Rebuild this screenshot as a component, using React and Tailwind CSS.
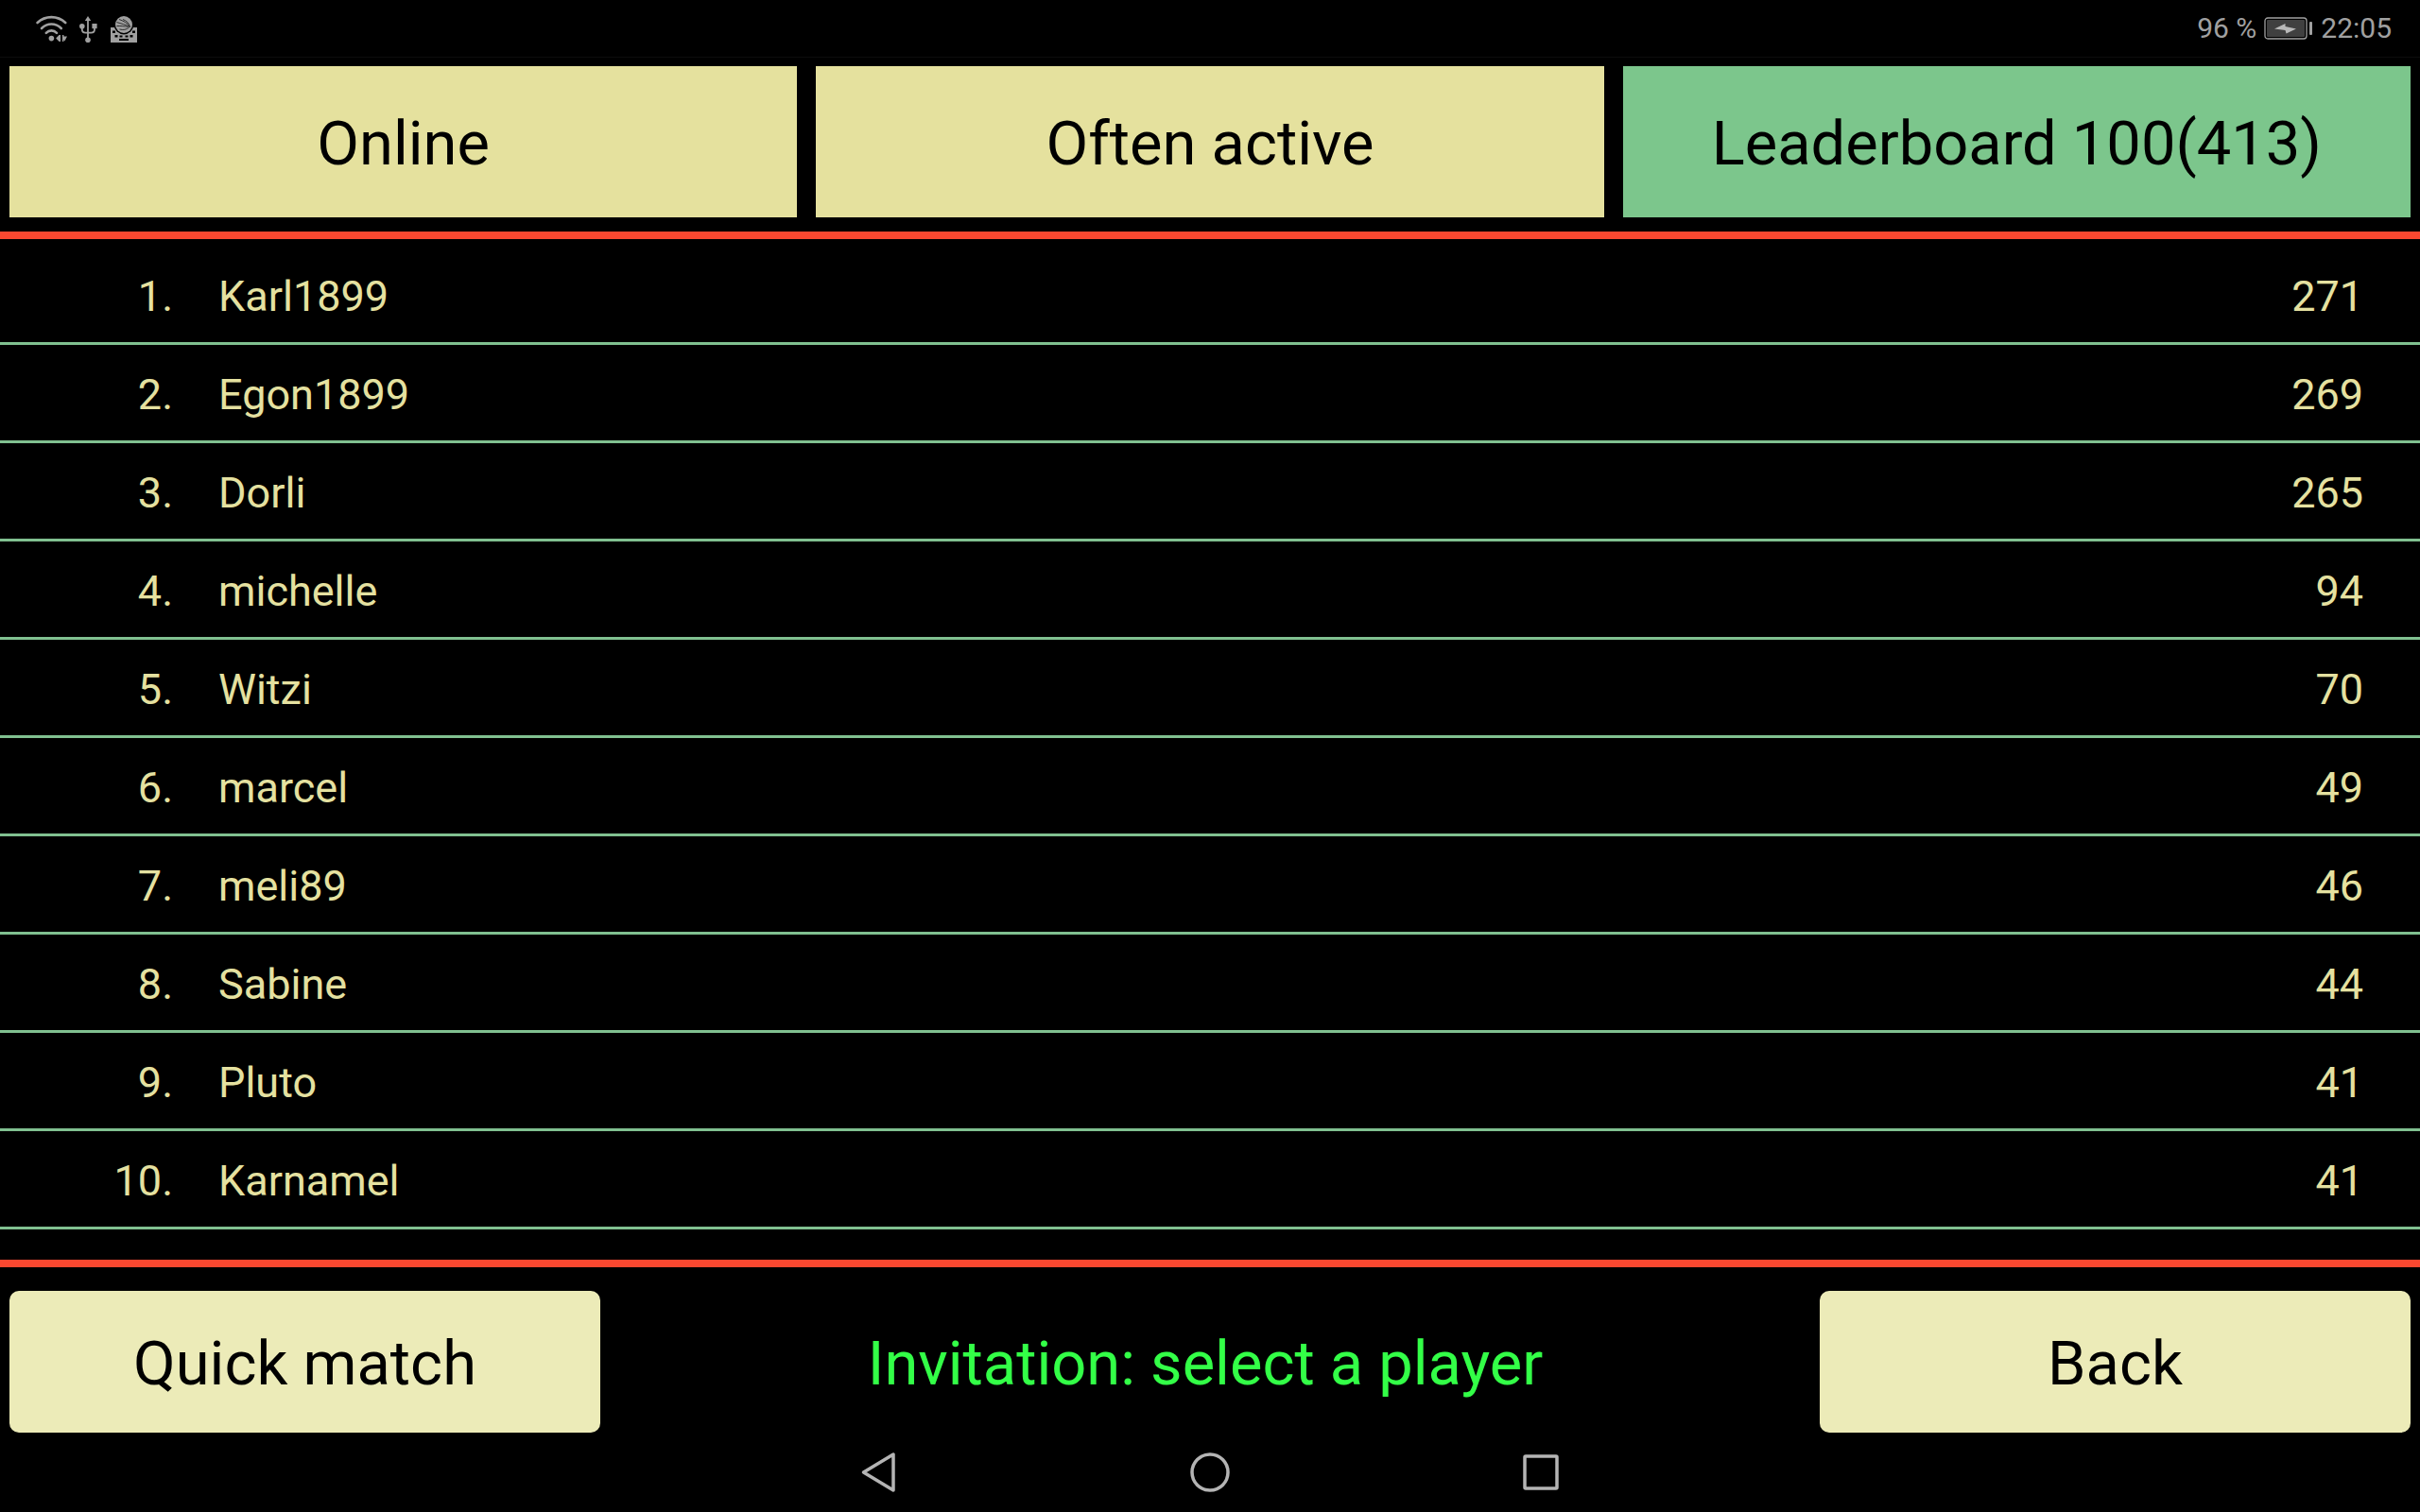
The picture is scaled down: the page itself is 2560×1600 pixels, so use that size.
import { useState } from 'react'

const players = [
  { name: 'Karl1899', score: 271 },
  { name: 'Egon1899', score: 269 },
  { name: 'Dorli', score: 265 },
  { name: 'michelle', score: 94 },
  { name: 'Witzi', score: 70 },
  { name: 'marcel', score: 49 },
  { name: 'meli89', score: 46 },
  { name: 'Sabine', score: 44 },
  { name: 'Pluto', score: 41 },
  { name: 'Karnamel', score: 41 }
]

const tabs = [
  { id: 'online', label: 'Online' },
  { id: 'active', label: 'Often active' },
  { id: 'leaderboard', label: 'Leaderboard 100(413)' }
]

function WifiIcon() {
  return (
    <svg width="34" height="30" viewBox="0 0 34 30" fill="none" stroke="#a0a0a0" strokeWidth="2.6" strokeLinecap="round">
      <path d="M1.6 9 C10 1.2 22.8 1.2 31.2 9" />
      <path d="M6 15 C12 9 20.8 9 26.8 15" />
      <path d="M10.8 19.8 C14 16.6 18.8 16.6 22 19.8" />
      <circle cx="16.4" cy="25.6" r="2.8" fill="#a0a0a0" stroke="none" />
      <path d="M26 22 V29 H24.6 L21.2 25.5 L24.6 22 Z M28 22 H29.4 V23.6 L33 23.6 L30.4 28.4 L29.4 27 V29 H28 Z" fill="#a0a0a0" stroke="none" />
    </svg>
  )
}

function UsbIcon() {
  return (
    <svg width="21" height="30" viewBox="0 0 21 30" fill="none" stroke="#a0a0a0" strokeWidth="1.8">
      <path d="M9 5 V27 M2.8 13 V16 Q2.8 19.6 6.4 19.6 H12.4 Q16 19.6 16 16 V13" />
      <path d="M9 2 L12.2 7 H5.8 Z" fill="#a0a0a0" stroke="none" />
      <circle cx="9" cy="27.2" r="2.8" fill="#a0a0a0" stroke="none" />
      <circle cx="2.8" cy="12.8" r="2.8" fill="#a0a0a0" stroke="none" />
      <rect x="13.4" y="10" width="5.2" height="5.2" fill="#a0a0a0" stroke="none" />
    </svg>
  )
}

function KeyboardIcon() {
  return (
    <svg width="28" height="30" viewBox="0 0 28 30">
      <path d="M0 14 H28 V30 H0 Z" fill="#a0a0a0" />
      <circle cx="14" cy="11" r="10.4" fill="#000" />
      <circle cx="14" cy="11" r="9" fill="#a0a0a0" />
      <path d="M9 5.5 C13 7 18 9 20.5 13.5 M13 5.5 C17 7 19.5 9.500 20.5 13.5 M6.5 8.5 C11 10 16 11 20.5 13.5 M6.5 12.5 C11 12.5 15 12.500 18.5 13.5 M9.5 16 C13 17 17 16.500 19.5 14" stroke="#222" strokeWidth="0.9" fill="none" />
      <path d="M2 17.5 h3 v2.500 h-3 Z M23 17.5 h3 v2.500 h-3 Z M4.5 22 h3 v2.500 h-3 Z M9.5 22.5 h3 v2 h-3 Z M15.5 22.5 h3 v2 h-3 Z M20.5 22 h3 v2.500 h-3 Z M9 26 h10 v2 h-10 Z" fill="#000" />
    </svg>
  )
}

function BatteryIcon() {
  return (
    <svg width="52" height="24" viewBox="0 0 52 24">
      <rect x="1" y="1" width="44" height="22" rx="3" fill="none" stroke="#a0a0a0" strokeWidth="1.3" />
      <rect x="3" y="3" width="40" height="18" rx="1" fill="#404040" />
      <path d="M11 12.5 L22.5 7 V10 L34 12.5 L23.5 17.5 L22.5 14 Z" fill="#b8b8b8" />
      <rect x="48" y="5" width="3" height="14" rx="1" fill="#a0a0a0" />
    </svg>
  )
}

function StatusBar() {
  return (
    <header className="flex h-[61px] items-center justify-between border-b border-[#0c0c0c] pl-[38px] pr-[30px] text-[30px] leading-8 text-[#a0a0a0]">
      <div className="flex items-center gap-3">
        <WifiIcon />
        <UsbIcon />
        <KeyboardIcon />
      </div>
      <div className="flex items-center gap-2">
        <span>96 %</span>
        <BatteryIcon />
        <span>22:05</span>
      </div>
    </header>
  )
}

function NavBar() {
  return (
    <nav className="flex h-[84px] justify-center">
      <button aria-label="Back" className="flex w-[350px] items-center justify-center">
        <svg width="44" height="44" viewBox="0 0 44 44" fill="none" stroke="#b4b4b4" strokeWidth="3.5" strokeLinejoin="round">
          <path d="M37 3 V41 L5.5 22 Z" />
        </svg>
      </button>
      <button aria-label="Home" className="flex w-[350px] items-center justify-center">
        <svg width="44" height="44" viewBox="0 0 44 44" fill="none" stroke="#b4b4b4" strokeWidth="3.5">
          <circle cx="22" cy="22" r="19" />
        </svg>
      </button>
      <button aria-label="Recent apps" className="flex w-[350px] items-center justify-center">
        <svg width="44" height="44" viewBox="0 0 44 44" fill="none" stroke="#b4b4b4" strokeWidth="3.5">
          <rect x="5" y="5" width="34" height="34" rx="1" />
        </svg>
      </button>
    </nav>
  )
}

export default function App() {
  const [activeTab, setActiveTab] = useState('leaderboard')

  return (
    <div className="flex min-h-screen flex-col bg-black font-['Roboto',sans-serif]">
      <StatusBar />

      <div role="tablist" className="grid grid-cols-3 gap-5 px-2.5 pt-[9px] pb-[15px]">
        {tabs.map(tab => (
          <button
            key={tab.id}
            role="tab"
            aria-selected={activeTab === tab.id}
            onClick={() => setActiveTab(tab.id)}
            className={`h-40 pt-1.5 text-[65px] text-black ${activeTab === tab.id ? 'bg-[#7cc68c]' : 'bg-[#e5e19e]'}`}
          >
            {tab.label}
          </button>
        ))}
      </div>

      <main className="flex-1 border-y-8 border-[#fa4830] pt-2">
        <table className="w-full border-separate border-spacing-0 text-[45px] text-[#e5e1a0]">
          <tbody>
            {players.map((player, idx) => (
              <tr key={player.name} className="h-[104px]">
                <td className="w-[183px] border-b-[3px] border-[#80c090] pt-1 text-right">{idx + 1}.</td>
                <td className="border-b-[3px] border-[#80c090] pt-1 pl-12">{player.name}</td>
                <td className="border-b-[3px] border-[#80c090] pt-1 pr-[60px] text-right">{player.score}</td>
              </tr>
            ))}
          </tbody>
        </table>
      </main>

      <footer className="flex items-center px-2.5 pt-[25px] text-[65px]">
        <button className="h-[150px] w-[625px] rounded-[10px] bg-[#ecebb8] pt-1.5 text-black">Quick match</button>
        <p className="flex-1 pt-1.5 pr-2.5 text-center text-[#33ff47]">Invitation: select a player</p>
        <button className="h-[150px] w-[625px] rounded-[10px] bg-[#ecebb8] pt-1.5 text-black">Back</button>
      </footer>

      <NavBar />
    </div>
  )
}
